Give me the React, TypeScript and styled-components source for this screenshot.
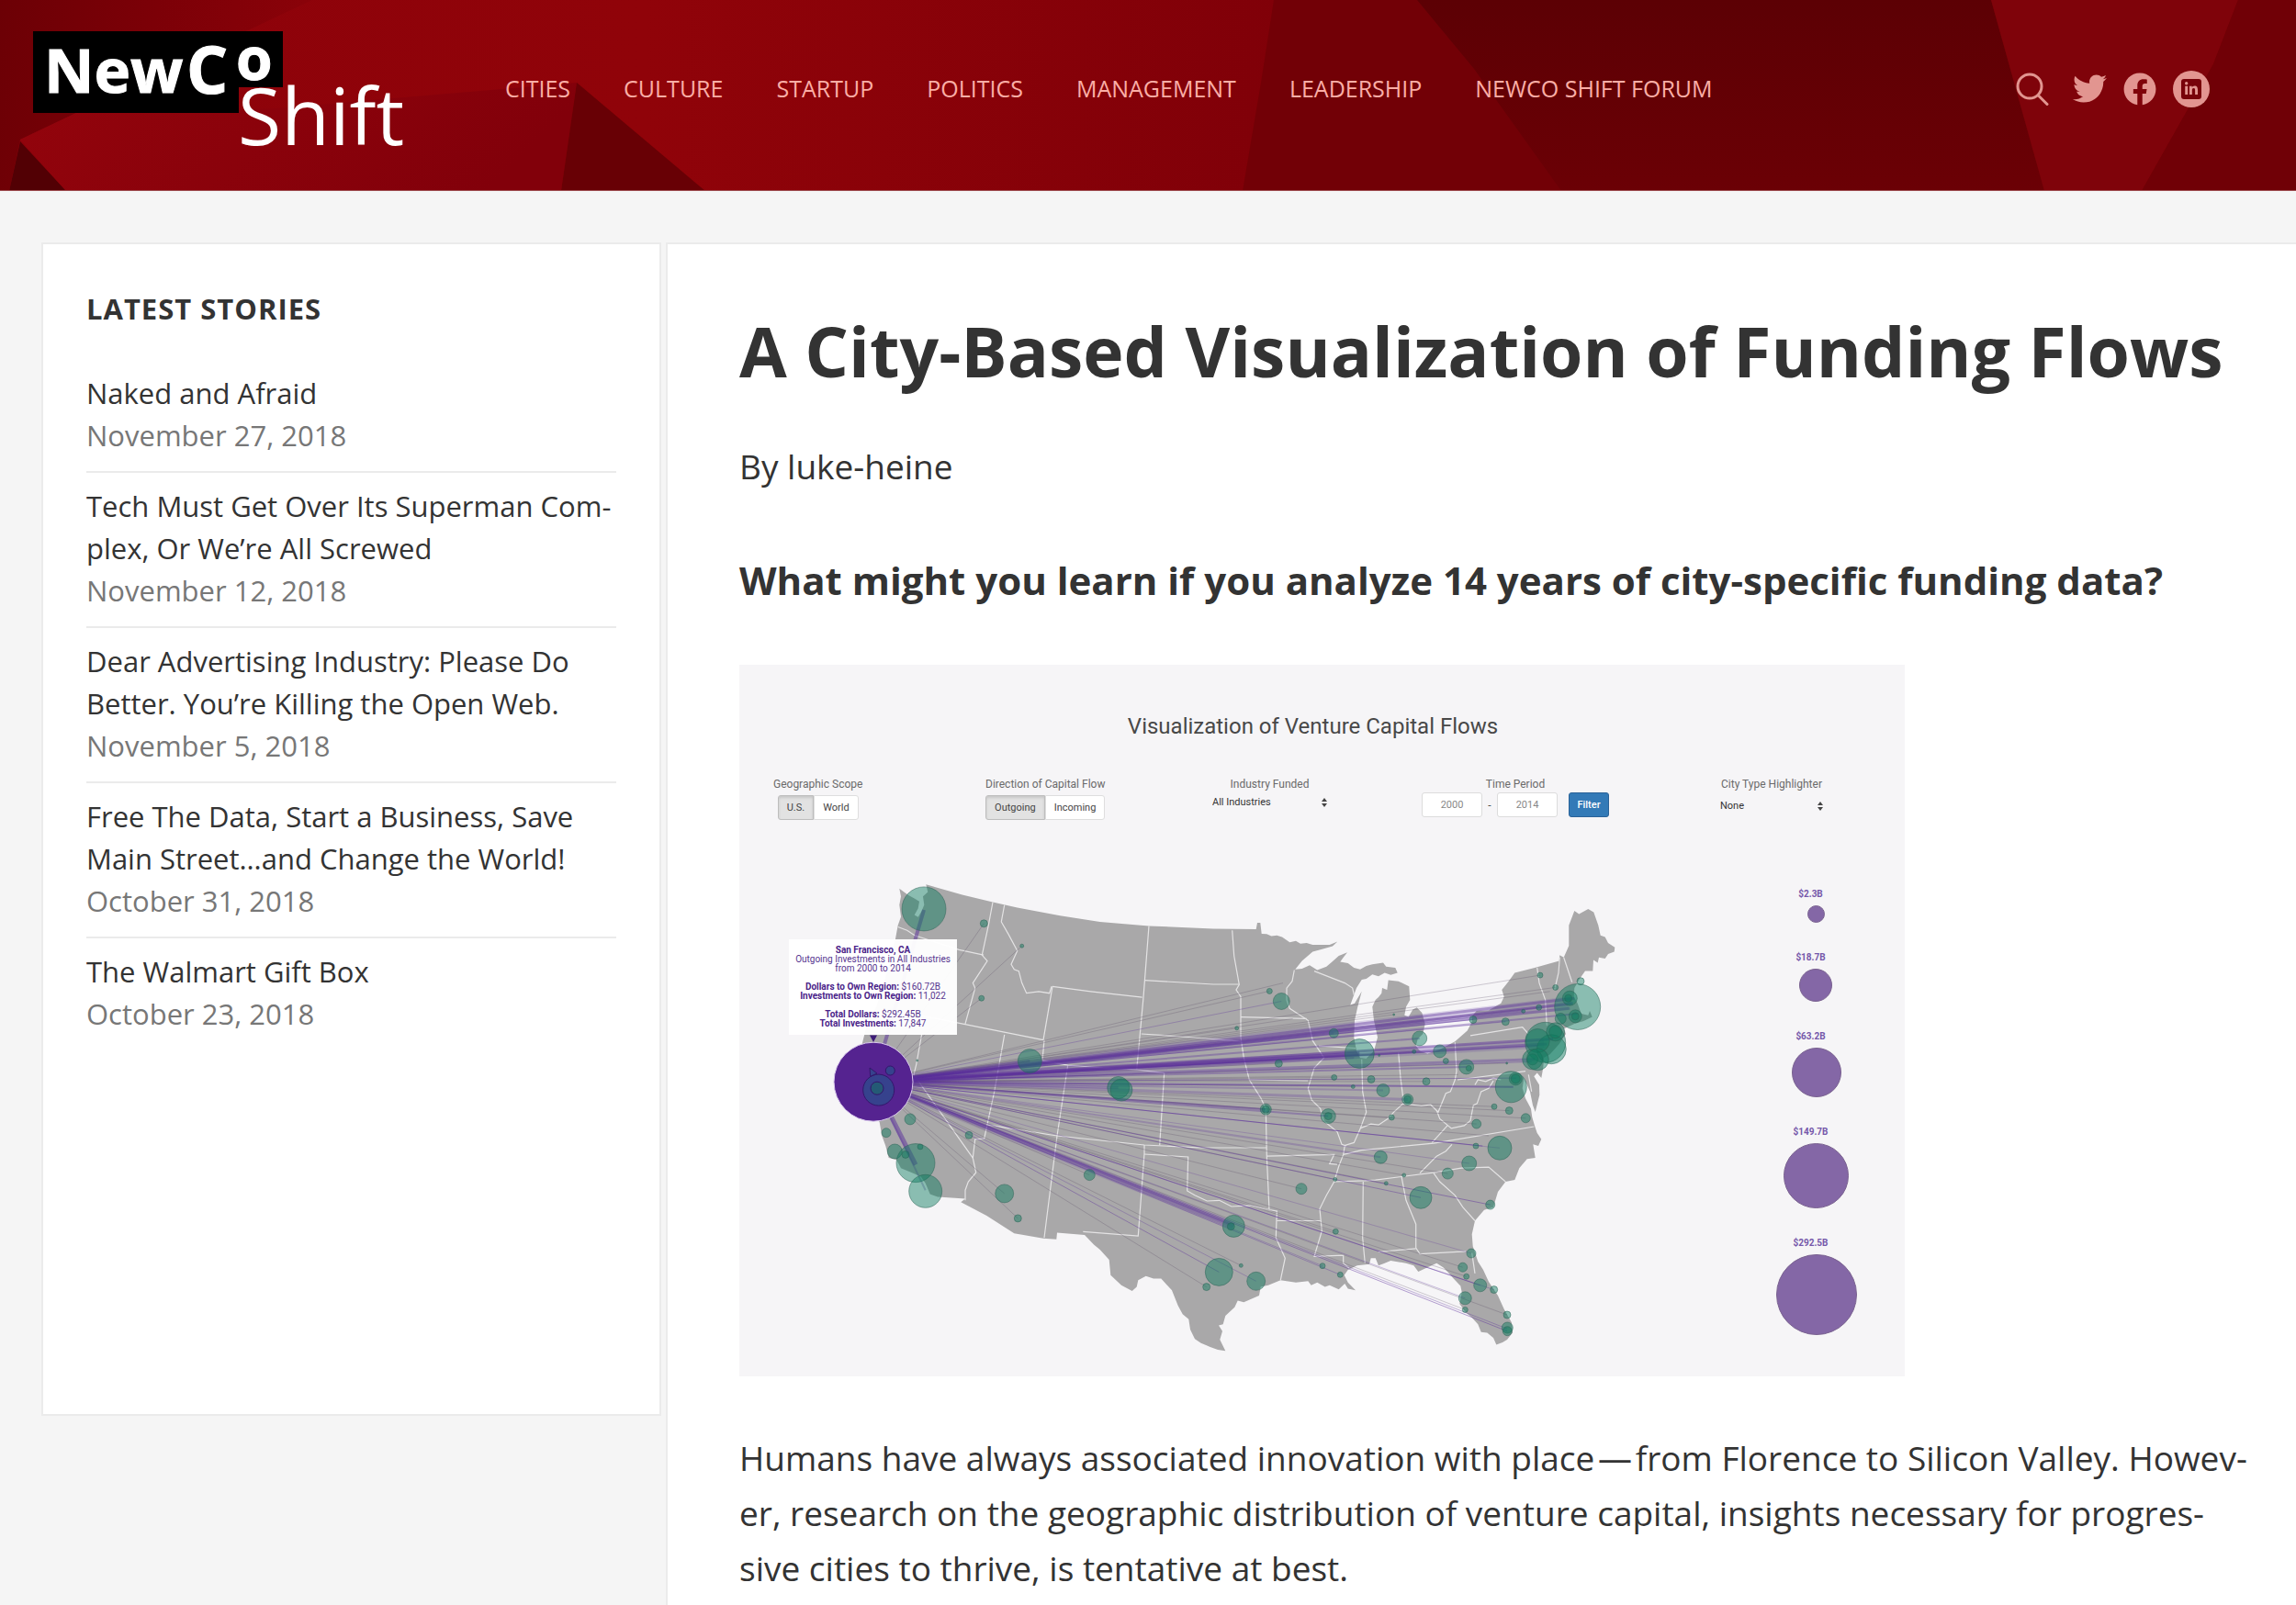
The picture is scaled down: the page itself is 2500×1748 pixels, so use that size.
import React from "react";
import styled, { createGlobalStyle } from "styled-components";
import { FaTwitter, FaFacebook, FaLinkedinIn } from "react-icons/fa";

const GlobalStyle = createGlobalStyle`
  *, *::before, *::after { box-sizing: border-box; }
  body {
    margin: 0;
    background: #f5f5f5;
    color: #333;
    font-family: "Open Sans", "Noto Sans", sans-serif;
  }
  h1, h2, p, ul, figure { margin: 0; padding: 0; }
  ul { list-style: none; }
  a { color: inherit; text-decoration: none; }
`;

const Page = styled.div`
  min-height: 100vh;
  display: flex;
  flex-direction: column;
  overflow-x: hidden;
`;

/* ---------- header ---------- */

const Header = styled.header`
  position: relative;
  display: flex;
  align-items: center;
  height: 208px;
  padding: 0 94px 15px 36px;
  background: #8a0009;
  color: #fbaea6;
`;

const Facets = styled.svg`
  position: absolute;
  inset: 0;
  width: 100%;
  height: 100%;
`;

const LogoLink = styled.a`
  position: relative;
  display: block;
  flex: none;
  width: 412px;
  height: 126px;
  svg { display: block; overflow: visible; }
`;

const Nav = styled.nav`
  position: relative;
  margin-left: 102px;
  padding-bottom: 2px;
  ul { display: flex; gap: 58px; }
  a { font-size: 25px; line-height: 40px; white-space: nowrap; }
`;

const Social = styled.div`
  position: relative;
  display: flex;
  align-items: center;
  gap: 18px;
  margin-left: auto;
  color: #e29590;
`;

const IconButton = styled.button`
  display: flex;
  margin: 0 8px 0 0;
  padding: 0;
  border: 0;
  background: none;
  color: inherit;
`;

const IconLink = styled.a`
  display: flex;
`;

const RoundBadge = styled.span`
  display: flex;
  align-items: center;
  justify-content: center;
  width: 40px;
  height: 40px;
  border-radius: 50%;
  background: #e29590;
`;

const SquareBadge = styled.span`
  display: flex;
  align-items: center;
  justify-content: center;
  width: 22px;
  height: 22px;
  border-radius: 3px;
  background: #78030a;
`;

/* ---------- columns ---------- */

const Columns = styled.div`
  flex: 1;
  display: flex;
  gap: 5px;
  padding: 56px 0 0 45px;
`;

const Sidebar = styled.aside`
  flex: 0 0 27vw;
  align-self: flex-start;
  min-height: 1278px;
  padding: 47px;
  background: #fff;
  border: 2px solid #ebebeb;
`;

const SidebarTitle = styled.h2`
  margin-bottom: 33px;
  font-size: 31px;
  line-height: 46px;
  font-weight: 700;
  letter-spacing: 1px;
  text-transform: uppercase;
`;

const Story = styled.li`
  padding: 13px 0 16px;
  border-bottom: 2px solid #ebebeb;
  font-size: 31px;
  line-height: 46px;
  &:last-child { border-bottom: 0; }
  a, time { display: block; }
  time { color: #777; }
`;

const Article = styled.main`
  flex: 1;
  min-width: 0;
  padding: 71px 52px 40px 78px;
  background: #fff;
  border: solid #ebebeb;
  border-width: 2px 0 0 2px;
`;

const Title = styled.h1`
  font-size: 75px;
  line-height: 90px;
  font-weight: 700;
`;

const Byline = styled.p`
  margin-top: 51px;
  font-size: 37px;
  line-height: 60px;
`;

const Subtitle = styled.h2`
  margin-top: 64px;
  font-size: 42px;
  line-height: 60px;
  font-weight: 700;
`;

const Paragraph = styled.p`
  margin-top: 59px;
  font-size: 37px;
  line-height: 60px;
`;

/* ---------- venture capital figure ---------- */

const Figure = styled.figure`
  margin-top: 62px;
  max-width: 1269px;
  background: #f6f5f7;
  font-family: Roboto, sans-serif;
  color: #555;
`;

const FigureTitle = styled.p`
  padding: 49px 20px 0 0;
  font-size: 24px;
  line-height: 36px;
  text-align: center;
  color: #484848;
`;

const Controls = styled.div`
  display: grid;
  grid-template-columns: 231fr 247fr 228fr 325fr 201fr;
  padding: 37px 0 0 37px;
  height: 101px;
`;

const Control = styled.div`
  display: flex;
  flex-direction: column;
  align-items: center;
  justify-self: start;
  font-size: 12px;
`;

const ControlLabel = styled.label`
  line-height: 16px;
  color: #6a6a6a;
`;

const Segments = styled.div`
  display: flex;
  margin-top: 4px;
`;

const Segment = styled.button<{ $active?: boolean }>`
  height: 27px;
  padding: 0 9px;
  border: 1px solid ${(p) => (p.$active ? "#bdbdbd" : "#dedede")};
  background: ${(p) => (p.$active ? "#e2e2e2" : "#fff")};
  box-shadow: ${(p) => (p.$active ? "inset 0 2px 3px rgba(0, 0, 0, 0.12)" : "none")};
  border-radius: ${(p) => (p.$active ? "3px 0 0 3px" : "0 3px 3px 0")};
  font: 11px Roboto, sans-serif;
  color: #444;
`;

const SelectWrap = styled.div<{ $wide?: boolean }>`
  display: flex;
  align-items: center;
  justify-content: space-between;
  width: ${(p) => (p.$wide ? "125px" : "112px")};
  margin-top: ${(p) => (p.$wide ? "4px" : "8px")};
`;

const Select = styled.select`
  flex: 1;
  height: 16px;
  padding: 0;
  border: 0;
  background: none;
  appearance: none;
  font: 11px/16px Roboto, sans-serif;
  color: #333;
`;

const Range = styled.div`
  display: flex;
  align-items: center;
  margin-top: 1px;
`;

const Year = styled.input`
  width: 66px;
  height: 27px;
  padding: 0;
  border: 1px solid #dcdcdc;
  border-radius: 3px;
  background: #fff;
  text-align: center;
  font: 11px Roboto, sans-serif;
  color: #888;
`;

const Dash = styled.span`
  width: 16px;
  text-align: center;
`;

const FilterButton = styled.button`
  width: 44px;
  height: 27px;
  margin-left: 12px;
  padding: 0;
  border: 1px solid #2a6298;
  border-radius: 3px;
  background: #337ab7;
  color: #fff;
  font: 500 11px Roboto, sans-serif;
`;

const Stage = styled.div`
  position: relative;
  display: grid;
  grid-template-columns: 1076fr 193fr;
`;

const MapDrawing = styled.svg`
  display: block;
  width: 100%;
`;

const Tooltip = styled.div`
  position: absolute;
  left: 54px;
  top: 113px;
  width: 183px;
  padding: 7px 0;
  background: rgba(255, 255, 255, 0.96);
  text-align: center;
  font-size: 10px;
  line-height: 10px;
  color: #56348f;
  p + p { margin-top: 10px; }
  b { font-weight: 700; color: #4a2389; }
`;

const Legend = styled.ul`
  display: flex;
  flex-direction: column;
  align-items: center;
  gap: 31px;
  padding-top: 57px;
`;

const LegendItem = styled.li`
  display: flex;
  flex-direction: column;
  align-items: center;
  gap: 5px;
  font-size: 10px;
  line-height: 14px;
  font-weight: 700;
  color: #7558aa;
  span { margin-right: 12px; }
`;

const Bubble = styled.i<{ $size: number }>`
  width: ${(p) => p.$size}px;
  height: ${(p) => p.$size}px;
  border: 1px solid #7a6290;
  border-radius: 50%;
  background: #8467a6;
`;

/* ---------- data ---------- */

const sections = ["CITIES", "CULTURE", "STARTUP", "POLITICS", "MANAGEMENT", "LEADERSHIP", "NEWCO SHIFT FORUM"];

const stories = [
  { title: "Naked and Afraid", date: "November 27, 2018" },
  { title: "Tech Must Get Over Its Superman Com\u00adplex, Or We’re All Screwed", date: "November 12, 2018" },
  { title: "Dear Advertising Industry: Please Do Better. You’re Killing the Open Web.", date: "November 5, 2018" },
  { title: "Free The Data, Start a Business, Save Main Street…and Change the World!", date: "October 31, 2018" },
  { title: "The Walmart Gift Box", date: "October 23, 2018" },
];

const intro =
  "Humans have always associated innovation with place\u200a—\u200afrom Florence to Silicon Valley. Howev\u00ader, " +
  "research on the geographic distribution of venture capital, insights necessary for progres\u00adsive cities to " +
  "thrive, is tentative at best.";

const legend: [string, number][] = [
  ["$2.3B", 19],
  ["$18.7B", 36],
  ["$63.2B", 54],
  ["$149.7B", 71],
  ["$292.5B", 88],
];

/* The map is kept in grid units; the eastern half starts 1440 units in. */
type Pt = [number, number];
const EAST = 1440;
const sx = (x: number) => Math.round((x / 3 + 16) * 10) / 10;
const sy = (y: number) => Math.round((y / 2.7034 + 20) * 10) / 10;
const parse = (s: string, dx = 0): Pt[] =>
  s.trim().split(/\s+/).map((p) => {
    const [x, y] = p.split(",").map(Number);
    return [x + dx, y];
  });
const line = (pts: Pt[]) => "M" + pts.map(([x, y]) => `${sx(x)} ${sy(y)}`).join("L");

const coastNorthWest = parse(`440,330 462,250 470,210 480,185 475,150 480,125 475,102 490,112 505,122 525,132 540,140
  536,160 524,180 536,186 548,168 556,150 552,125 568,112 562,90 680,120 780,142 860,158 1000,182 1130,200 1290,212 1500,220`);
const coastEast = parse(`200,222 204,203 214,203 218,235 235,236 250,242 268,240 285,245 310,260 330,256 345,264 365,262 385,268 415,268 440,268 466,258 450,272
  410,282 385,288 350,315 328,340 350,338 375,328 400,342 430,332 450,316 470,300 498,290 485,305 475,318 500,322 520,335 540,340 560,330 580,325 615,320
  625,332 655,335 662,350 640,356 620,350 600,360 580,355 560,368 545,370 528,395 508,445 522,440 545,405
  532,450 522,490 520,540 528,580 540,600 560,602 585,580 597,540 585,490 580,450 590,430 600,422 610,410 612,395 628,400 632,372 665,375 700,390 703,430 690,450 685,475
  698,480 712,458 725,452 742,468 752,500 745,530 728,545 722,565 735,580 760,588 800,576 850,552 890,520 905,495 905,478 920,462 960,460 1000,440
  1010,420 1003,400 1025,375 1045,350 1110,335 1190,315 1192,298 1205,305 1222,270 1222,210 1240,168 1255,177 1285,162 1303,172 1318,210 1325,240
  1340,245 1350,262 1372,275 1370,288 1350,295 1340,308 1320,305 1316,320 1302,312 1300,345 1275,345 1255,370 1240,395 1238,420 1250,440 1262,470 1285,475
  1290,462 1298,480 1270,492 1240,500 1205,515 1212,530 1190,560 1160,590 1140,600 1138,630 1132,660 1118,645 1108,655 1125,680 1126,710 1112,760
  1104,740 1095,700 1085,680 1075,660 1070,690 1080,720 1098,750 1102,775 1110,800 1118,822 1132,840 1122,860 1105,855 1112,895 1085,898 1060,925 1045,960
  1015,965 990,995 975,1040 945,1048 915,1080 905,1120 908,1155 925,1200 942,1225 960,1260 990,1300 1010,1340 1035,1380 1038,1410
  1020,1430 1005,1438 985,1445 975,1425 955,1410 935,1408 925,1385 905,1365 885,1350 865,1325 872,1290 868,1272 845,1250 830,1235
  812,1218 790,1205 765,1215 730,1230 715,1212 690,1205 640,1198 620,1205 600,1212 590,1190 575,1190 570,1208 530,1212 500,1225 488,1240 500,1262
  525,1285 500,1280 490,1265 470,1282 440,1270 425,1275 400,1262 380,1270 370,1258 330,1262 280,1255 240,1270 215,1275 210,1300
  160,1320 140,1315 130,1335 100,1360 92,1385 78,1388 90,1405 82,1430 100,1463 75,1460 50,1452`, EAST);
const coastSouthWest = parse(`1480,1448 1460,1440 1440,1428 1425,1400 1420,1370 1400,1355 1385,1330 1365,1285 1330,1250 1305,1250 1280,1243 1255,1255
  1250,1275 1235,1287 1200,1270 1165,1240 1160,1195 1130,1165 1110,1150 1080,1122 990,1115 988,1135 945,1132 850,1117 760,1065 676,1025 690,1015 600,1010
  575,1002 560,970 545,950 520,940 480,925 465,900 440,895 430,860 418,830 410,790 380,740 365,700 370,640 350,570 370,500 400,450`);
const outline = line([...coastNorthWest, ...coastEast, ...coastSouthWest]) + "Z";

const borders = [
  ...[
    "470,215 500,225 525,240 600,262 670,282 750,298",
    "780,142 766,210 745,298 762,315 715,380 722,395 690,500",
    "818,150 808,200 830,235 860,285 840,325 850,340 865,345 875,380 890,410 930,405 965,410 972,390",
    "975,390 1100,405 1268,422", "975,390 945,548", "540,475 690,502 945,548",
    "548,530 530,620 522,650 715,895", "818,532 785,700 752,838 722,840 715,895 725,938 700,965 690,990 690,1020",
    "1025,622 990,830 948,1130", "948,548 942,608 1025,622 1140,630 1250,635 1340,645 1325,858",
    "1290,212 1272,422 1250,635", "1275,372 1500,384 1585,384", "1265,530 1400,538 1500,545 1590,552",
    "760,797 990,830 1275,857 1460,865 1675,865", "1275,857 1275,882 1255,1125 1075,1112",
    "1275,884 1418,892 1415,992 1440,1005 1480,1022 1520,1020 1560,1038 1620,1035 1682,1047",
  ].map((s) => parse(s)),
  ...[
    "122,225 128,300 145,385 135,400 150,420 150,540 160,600 178,665 215,718 232,750 235,890 243,1048 268,1052 265,1130 295,1190 280,1255",
    "325,342 318,375 300,395 300,430 310,455 370,490 385,550 422,600 390,630 370,690 382,725 410,750 420,785 465,818 480,855 495,860",
    "178,665 370,668", "150,480 365,485", "390,345 490,380 515,395 520,415", "405,565 525,572",
    "545,605 548,700 560,760 540,810 520,850 490,858 485,885 470,920 455,965 430,1005 408,1045 415,1110 390,1185 485,1182 485,1205 505,1220",
    "235,890 455,885 440,912 465,914", "665,585 672,660 682,730",
    "540,808 575,795 600,798 630,780 650,760 680,735 740,742 770,738 795,760 820,705 835,700 850,665 855,640 850,555",
    "858,665 1080,640", "790,755 800,780 838,808 880,800 900,785 910,740 922,735 935,700 960,690 975,668",
    "485,885 545,872 780,852 1108,803", "455,965 555,962 590,960 790,937 870,925 960,922 1015,965",
    "840,855 820,875 790,890 735,940", "825,800 775,850", "550,965 548,1130 556,1205",
    "675,950 690,1020 722,1090 722,1160 735,1178 885,1170", "600,1172 722,1162", "780,940 800,965 850,1005 875,1040 915,1080",
    "268,1080 410,1080", "900,535 1070,510 1090,530", "1118,335 1125,380 1145,430 1150,505", "1192,305 1188,350 1175,400",
    "1205,305 1232,378", "915,680 925,665 950,670 975,660 1000,665", "1090,650 1100,700", "905,1175 915,1235",
  ].map((s) => parse(s, EAST)),
];

const hub: Pt = [390, 671];
/* x, y, stroke width, opacity */
const flows: [number, number, number, number][] = [
  [2670, 432, 9, 0.16], [2660, 450, 6, 0.16], [2580, 560, 9, 0.16], [1978, 592, 8, 0.14], [1567, 1096, 9, 0.12],
  [2680, 425, 3, 0.4], [2675, 440, 3, 0.45], [2665, 455, 3, 0.35], [2690, 470, 2, 0.35], [2610, 545, 3, 0.45],
  [2590, 560, 3, 0.4], [2560, 565, 2, 0.35], [2550, 605, 3, 0.35], [2540, 612, 1, 0.4], [2480, 686, 2, 0.5],
  [2490, 660, 1, 0.4], [2327, 627, 2, 0.35], [2240, 581, 1, 0.35], [2174, 543, 2, 0.35], [1978, 588, 4, 0.45],
  [1960, 600, 2, 0.3], [2055, 696, 2, 0.25], [2135, 723, 3, 0.25], [1876, 772, 2, 0.35], [1672, 752, 2, 0.4],
  [2380, 860, 1, 0.55], [2436, 866, 1, 0.25], [2336, 911, 1, 0.25], [2178, 1012, 1, 0.4], [2405, 1033, 1, 0.45],
  [2047, 893, 2, 0.25], [1567, 1096, 5, 0.3], [1555, 1090, 2, 0.35], [1640, 1258, 1, 0.3], [1519, 1231, 1, 0.4],
  [2460, 1405, 1, 0.45], [2460, 1398, 1, 0.35], [2417, 1283, 1, 0.3], [2372, 1270, 1, 0.45], [2323, 1308, 1, 0.3],
  [2343, 1176, 1, 0.25], [1190, 688, 3, 0.3], [901, 610, 3, 0.35], [1894, 528, 1, 0.35], [1723, 434, 1, 0.3],
  [528, 915, 5, 0.5], [555, 165, 4, 0.5], [560, 990, 2, 0.3], [2513, 463, 2, 0.35], [2455, 494, 1, 0.35],
  [2349, 488, 1, 0.35], [1915, 1239, 1, 0.35], [1857, 1213, 1, 0.3],
];
const faintFlows = parse(`1684,404 1728,380 2568,357 2618,393 2600,405 2564,452 2460,616 2090,473 2157,582 1577,513 1714,617 1760,485 1895,658 1957,685
  2016,664 2196,670 2083,776 2418,744 2467,756 2521,778 2360,795 2266,941 1788,986 2123,946 2065,970 1898,958 1900,1112 2327,1244 2315,1217
  2323,1342 2460,1357 1591,1212 1478,1275 1096,945 818,1000 862,1073 702,828 751,205 743,425 875,271 2400,830 2300,650`);

/* x, y, radius */
const westCities: [number, number, number][] = [
  [555, 162, 24], [751, 205, 4], [743, 425, 3], [901, 610, 13], [1190, 688, 12], [1200, 695, 12], [1096, 945, 6],
  [818, 1000, 10], [862, 1073, 4], [702, 828, 4], [510, 781, 6], [432, 821, 5], [460, 876, 8], [528, 910, 21],
  [560, 993, 18], [495, 885, 4], [543, 862, 3], [875, 271, 2], [533, 608, 1],
];
const eastCities: [number, number, number][] = [
  [283, 434, 9], [244, 404, 3], [454, 528, 5], [274, 617, 4], [538, 588, 16], [734, 543, 8], [800, 581, 7], [887, 627, 8],
  [895, 631, 3], [615, 696, 7], [695, 723, 6], [695, 723, 4], [576, 664, 4], [756, 670, 4], [455, 658, 3], [517, 685, 2], [436, 772, 8],
  [436, 772, 4], [232, 752, 6], [232, 752, 4], [643, 776, 3], [607, 893, 7], [348, 986, 6], [738, 1012, 12], [826, 941, 6],
  [896, 911, 8], [996, 866, 13], [920, 795, 5], [978, 744, 3], [1027, 756, 4], [1081, 778, 5], [918, 860, 3], [965, 1033, 5],
  [1033, 686, 17], [1048, 662, 7], [1048, 662, 5], [1250, 450, 25], [1225, 425, 8], [1220, 425, 4], [1243, 478, 7], [1243, 478, 4],
  [1195, 485, 6], [1145, 555, 22], [1165, 575, 16], [1178, 524, 10], [1178, 524, 7], [1120, 550, 13], [1103, 605, 11], [1103, 605, 6],
  [1120, 605, 12], [1260, 375, 4], [1128, 357, 3], [1124, 452, 3], [1015, 494, 4], [909, 488, 4], [1178, 393, 3], [1073, 463, 2],
  [127, 1096, 12], [118, 1097, 4], [79, 1231, 15], [38, 1275, 4], [200, 1258, 10], [460, 1112, 3], [417, 1213, 3], [475, 1239, 3],
  [903, 1176, 5], [875, 1217, 5], [932, 1270, 7], [977, 1283, 4], [883, 1308, 7], [887, 1244, 3], [1020, 1357, 4], [1021, 1395, 6],
  [1021, 1405, 5], [883, 1342, 3], [458, 958, 2], [625, 970, 2], [683, 946, 2], [137, 513, 2], [151, 1212, 2], [820, 610, 3],
  [716, 582, 2], [650, 473, 1], [1019, 616, 1], [602, 593, 1],
];
const cities = [...westCities, ...eastCities.map(([x, y, r]) => [x + EAST, y, r])];

/* ---------- parts ---------- */

function Backdrop() {
  return (
    <Facets viewBox="0 0 2500 208" preserveAspectRatio="none" aria-hidden="true">
      <defs>
        <linearGradient id="base" x1="0" x2="1">
          <stop offset="0" stopColor="#8d020a" />
          <stop offset="0.5" stopColor="#900309" />
          <stop offset="1" stopColor="#800008" />
        </linearGradient>
        <linearGradient id="corner" x1="0" x2="1" y2="0.1">
          <stop offset="0" stopColor="#6c0005" />
          <stop offset="0.5" stopColor="#7c0007" />
          <stop offset="1" stopColor="#8a0209" />
        </linearGradient>
        <linearGradient id="ridge" x1="0" x2="1" y2="0.2">
          <stop offset="0" stopColor="#93040c" />
          <stop offset="1" stopColor="#82000a" />
        </linearGradient>
        <linearGradient id="shade" x1="0" x2="0" y2="1">
          <stop offset="0" stopColor="#5c0004" />
          <stop offset="1" stopColor="#6b0005" />
        </linearGradient>
      </defs>
      <rect width="1400" height="208" fill="url(#base)" />
      <path d="M0 0H340L268 34L85 122L22 152L10 208H0Z" fill="url(#corner)" />
      <path d="M22 154L72 208H10Z" fill="#520004" />
      <path d="M22 152L85 122L300 118L628 90L611 208H72Z" fill="url(#ridge)" />
      <path d="M628 90L768 208H611Z" fill="#680005" />
      <path d="M1387 0H2500V208H1353L1373 90Z" fill="#720006" />
      <path d="M1543 0H2168L2226 208H1700L1605 75Z" fill="url(#shade)" />
      <path d="M2168 0H2437L2410 70L2332 208H2226Z" fill="#7f030a" />
      <path d="M2437 0H2500V208H2332L2410 70Z" fill="#700006" />
      <rect y="207" width="2500" height="1" fill="#9c4a4e" />
    </Facets>
  );
}

function Logo() {
  return (
    <svg width="412" height="126" viewBox="36 34 412 126" role="img" aria-label="NewCo Shift">
      <path d="M36 34H308V95H260V123H36Z" fill="#000" />
      <g fill="#fff" fontFamily="'Open Sans', sans-serif">
        <g fontWeight="700" stroke="#fff" strokeWidth="1">
          <text x="48" y="101" fontSize="67">New</text>
          <text x="203" y="102" fontSize="71">C</text>
          <text x="257" y="87" fontSize="64">o</text>
        </g>
        <text x="259" y="158" fontSize="86">Shift</text>
      </g>
    </svg>
  );
}

function Arrows() {
  return (
    <svg width="6" height="10" viewBox="0 0 6 10" aria-hidden="true">
      <path d="M3 0L6 4H0ZM3 10L0 6H6Z" fill="#444" />
    </svg>
  );
}

function FlowMap() {
  return (
    <MapDrawing viewBox="0 0 1076 589" role="img" aria-label="Venture capital flows from San Francisco">
      <path d={outline} fill="#a9a8a9" />
      {borders.map((b, i) => (
        <path key={i} d={line(b)} fill="none" stroke="#e4e3e4" strokeWidth="1.2" />
      ))}
      <g stroke="#5a4a66" strokeOpacity="0.28" strokeWidth="1">
        {faintFlows.map(([x, y], i) => (
          <line key={i} x1={sx(hub[0])} y1={sy(hub[1])} x2={sx(x)} y2={sy(y)} />
        ))}
      </g>
      <g stroke="#5a2d9c">
        {flows.map(([x, y, w, o], i) => (
          <line key={i} x1={sx(hub[0])} y1={sy(hub[1])} x2={sx(x)} y2={sy(y)} strokeWidth={w} strokeOpacity={o} />
        ))}
      </g>
      <g fill="#0b7a5d" fillOpacity="0.46" stroke="#2c6455" strokeOpacity="0.5">
        {cities.map(([x, y, r], i) => (
          <circle key={i} cx={sx(x)} cy={sy(y)} r={r} />
        ))}
      </g>
      <circle cx={sx(390)} cy={sy(671)} r="43" fill="#552390" stroke="#d9c8ec" />
      <g fill="#1d5c8a" fillOpacity="0.55" stroke="#33166b">
        <circle cx={sx(407)} cy={sy(695)} r="17" />
        <circle cx={sx(445)} cy={sy(638)} r="5" />
        <circle cx={sx(402)} cy={sy(690)} r="7" fill="#157063" />
        <path d={line([[378, 630], [402, 646], [380, 655]]) + "Z"} />
      </g>
      <path d={line([[378, 534], [402, 534], [390, 554]]) + "Z"} fill="#3d1c78" />
    </MapDrawing>
  );
}

function VentureFigure() {
  return (
    <Figure>
      <FigureTitle>Visualization of Venture Capital Flows</FigureTitle>
      <Controls>
        <Control>
          <ControlLabel as="span">Geographic Scope</ControlLabel>
          <Segments>
            <Segment $active>U.S.</Segment>
            <Segment>World</Segment>
          </Segments>
        </Control>
        <Control>
          <ControlLabel as="span">Direction of Capital Flow</ControlLabel>
          <Segments>
            <Segment $active>Outgoing</Segment>
            <Segment>Incoming</Segment>
          </Segments>
        </Control>
        <Control>
          <ControlLabel htmlFor="industry">Industry Funded</ControlLabel>
          <SelectWrap $wide>
            <Select id="industry"><option>All Industries</option></Select>
            <Arrows />
          </SelectWrap>
        </Control>
        <Control>
          <ControlLabel htmlFor="from-year">Time Period</ControlLabel>
          <Range>
            <Year id="from-year" defaultValue="2000" />
            <Dash>-</Dash>
            <Year aria-label="To year" defaultValue="2014" />
            <FilterButton>Filter</FilterButton>
          </Range>
        </Control>
        <Control>
          <ControlLabel htmlFor="city-type">City Type Highlighter</ControlLabel>
          <SelectWrap>
            <Select id="city-type"><option>None</option></Select>
            <Arrows />
          </SelectWrap>
        </Control>
      </Controls>
      <Stage>
        <FlowMap />
        <Legend>
          {legend.map(([label, size]) => (
            <LegendItem key={label}>
              <span>{label}</span>
              <Bubble $size={size} />
            </LegendItem>
          ))}
        </Legend>
        <Tooltip>
          <p><b>San Francisco, CA</b><br />Outgoing Investments in All Industries<br />from 2000 to 2014</p>
          <p><b>Dollars to Own Region:</b> $160.72B<br /><b>Investments to Own Region:</b> 11,022</p>
          <p><b>Total Dollars:</b> $292.45B<br /><b>Total Investments:</b> 17,847</p>
        </Tooltip>
      </Stage>
    </Figure>
  );
}

export default function App() {
  return (
    <Page>
      <GlobalStyle />
      <Header>
        <Backdrop />
        <LogoLink href="#"><Logo /></LogoLink>
        <Nav>
          <ul>
            {sections.map((s) => (
              <li key={s}><a href="#">{s}</a></li>
            ))}
          </ul>
        </Nav>
        <Social>
          <IconButton aria-label="Search">
            <svg width="36" height="36" viewBox="0 0 36 36" fill="none" stroke="currentColor" strokeWidth="3" strokeLinecap="round">
              <circle cx="15" cy="15" r="13" />
              <path d="M24.5 25L34 34.5" />
            </svg>
          </IconButton>
          <IconLink href="#" aria-label="Twitter"><FaTwitter size={37} /></IconLink>
          <IconLink href="#" aria-label="Facebook"><FaFacebook size={36} /></IconLink>
          <IconLink href="#" aria-label="LinkedIn">
            <RoundBadge><SquareBadge><FaLinkedinIn size={16} /></SquareBadge></RoundBadge>
          </IconLink>
        </Social>
      </Header>
      <Columns>
        <Sidebar>
          <SidebarTitle>Latest Stories</SidebarTitle>
          <ul>
            {stories.map((s) => (
              <Story key={s.date}>
                <a href="#">{s.title}</a>
                <time>{s.date}</time>
              </Story>
            ))}
          </ul>
        </Sidebar>
        <Article>
          <Title>A City-Based Visualization of Funding Flows</Title>
          <Byline>By luke-heine</Byline>
          <Subtitle>What might you learn if you analyze 14 years of city-specific funding data?</Subtitle>
          <VentureFigure />
          <Paragraph>{intro}</Paragraph>
        </Article>
      </Columns>
    </Page>
  );
}
